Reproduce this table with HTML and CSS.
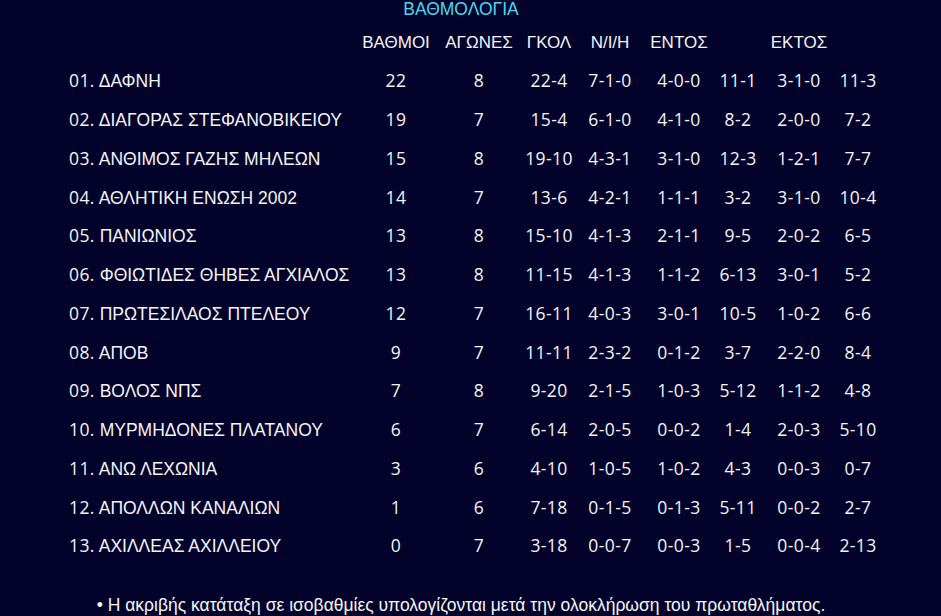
FILE: index.html
```html
<!DOCTYPE html>
<html lang="el">
<head>
<meta charset="utf-8">
<title>ΒΑΘΜΟΛΟΓΙΑ</title>
<link rel="stylesheet" href="styles.css">
</head>
<body>
<div class="page">
  <h1 class="title">ΒΑΘΜΟΛΟΓΙΑ</h1>
  <div class="standings">
    <div class="row head">
      <div></div><div>ΒΑΘΜΟΙ</div><div>ΑΓΩΝΕΣ</div><div>ΓΚΟΛ</div><div>Ν/Ι/Η</div><div>ΕΝΤΟΣ</div><div></div><div>ΕΚΤΟΣ</div><div></div>
    </div>
    <div class="row"><div class="name"><span class="n">01.</span> ΔΑΦΝΗ</div><div class="n">22</div><div class="n">8</div><div class="n">22-4</div><div class="n">7-1-0</div><div class="n">4-0-0</div><div class="n">11-1</div><div class="n">3-1-0</div><div class="n">11-3</div></div>
    <div class="row"><div class="name"><span class="n">02.</span> ΔΙΑΓΟΡΑΣ ΣΤΕΦΑΝΟΒΙΚΕΙΟΥ</div><div class="n">19</div><div class="n">7</div><div class="n">15-4</div><div class="n">6-1-0</div><div class="n">4-1-0</div><div class="n">8-2</div><div class="n">2-0-0</div><div class="n">7-2</div></div>
    <div class="row"><div class="name"><span class="n">03.</span> ΑΝΘΙΜΟΣ ΓΑΖΗΣ ΜΗΛΕΩΝ</div><div class="n">15</div><div class="n">8</div><div class="n">19-10</div><div class="n">4-3-1</div><div class="n">3-1-0</div><div class="n">12-3</div><div class="n">1-2-1</div><div class="n">7-7</div></div>
    <div class="row"><div class="name"><span class="n">04.</span> ΑΘΛΗΤΙΚΗ ΕΝΩΣΗ 2002</div><div class="n">14</div><div class="n">7</div><div class="n">13-6</div><div class="n">4-2-1</div><div class="n">1-1-1</div><div class="n">3-2</div><div class="n">3-1-0</div><div class="n">10-4</div></div>
    <div class="row"><div class="name"><span class="n">05.</span> ΠΑΝΙΩΝΙΟΣ</div><div class="n">13</div><div class="n">8</div><div class="n">15-10</div><div class="n">4-1-3</div><div class="n">2-1-1</div><div class="n">9-5</div><div class="n">2-0-2</div><div class="n">6-5</div></div>
    <div class="row"><div class="name"><span class="n">06.</span> ΦΘΙΩΤΙΔΕΣ ΘΗΒΕΣ ΑΓΧΙΑΛΟΣ</div><div class="n">13</div><div class="n">8</div><div class="n">11-15</div><div class="n">4-1-3</div><div class="n">1-1-2</div><div class="n">6-13</div><div class="n">3-0-1</div><div class="n">5-2</div></div>
    <div class="row"><div class="name"><span class="n">07.</span> ΠΡΩΤΕΣΙΛΑΟΣ ΠΤΕΛΕΟΥ</div><div class="n">12</div><div class="n">7</div><div class="n">16-11</div><div class="n">4-0-3</div><div class="n">3-0-1</div><div class="n">10-5</div><div class="n">1-0-2</div><div class="n">6-6</div></div>
    <div class="row"><div class="name"><span class="n">08.</span> ΑΠΟΒ</div><div class="n">9</div><div class="n">7</div><div class="n">11-11</div><div class="n">2-3-2</div><div class="n">0-1-2</div><div class="n">3-7</div><div class="n">2-2-0</div><div class="n">8-4</div></div>
    <div class="row"><div class="name"><span class="n">09.</span> ΒΟΛΟΣ ΝΠΣ</div><div class="n">7</div><div class="n">8</div><div class="n">9-20</div><div class="n">2-1-5</div><div class="n">1-0-3</div><div class="n">5-12</div><div class="n">1-1-2</div><div class="n">4-8</div></div>
    <div class="row"><div class="name"><span class="n">10.</span> ΜΥΡΜΗΔΟΝΕΣ ΠΛΑΤΑΝΟΥ</div><div class="n">6</div><div class="n">7</div><div class="n">6-14</div><div class="n">2-0-5</div><div class="n">0-0-2</div><div class="n">1-4</div><div class="n">2-0-3</div><div class="n">5-10</div></div>
    <div class="row"><div class="name"><span class="n">11.</span> ΑΝΩ ΛΕΧΩΝΙΑ</div><div class="n">3</div><div class="n">6</div><div class="n">4-10</div><div class="n">1-0-5</div><div class="n">1-0-2</div><div class="n">4-3</div><div class="n">0-0-3</div><div class="n">0-7</div></div>
    <div class="row"><div class="name"><span class="n">12.</span> ΑΠΟΛΛΩΝ ΚΑΝΑΛΙΩΝ</div><div class="n">1</div><div class="n">6</div><div class="n">7-18</div><div class="n">0-1-5</div><div class="n">0-1-3</div><div class="n">5-11</div><div class="n">0-0-2</div><div class="n">2-7</div></div>
    <div class="row"><div class="name"><span class="n">13.</span> ΑΧΙΛΛΕΑΣ ΑΧΙΛΛΕΙΟΥ</div><div class="n">0</div><div class="n">7</div><div class="n">3-18</div><div class="n">0-0-7</div><div class="n">0-0-3</div><div class="n">1-5</div><div class="n">0-0-4</div><div class="n">2-13</div></div>
  </div>
  <p class="note">• Η ακριβής κατάταξη σε ισοβαθμίες υπολογίζονται μετά την ολοκλήρωση του πρωταθλήματος.</p>
</div>
</body>
</html>
```
FILE: styles.css
```css
html, body {
  margin: 0;
  padding: 0;
  background: #03022b;
}
body {
  color: #f4f4f4;
  font-family: "Liberation Sans", Arial, sans-serif;
  font-size: 17.5px;
}
.page {
  width: 922px;
  overflow: hidden;
}
.title {
  margin: 0;
  height: 19px;
  line-height: 19px;
  text-align: center;
  font-size: 17.5px;
  font-weight: normal;
  color: #4fd6ef;
}
.standings {
  padding-left: 69px;
  padding-top: 5px;
}
.row {
  display: grid;
  grid-template-columns: 286px 82px 84px 56px 66px 72px 46px 76px 42px;
  height: 38.75px;
  align-items: center;
}
.row > div {
  text-align: center;
  white-space: nowrap;
}
.row > .name {
  text-align: left;
}
.head > div {
  font-size: 17px;
}
.n {
  font-family: "Open Sans", "Liberation Sans", sans-serif;
  font-size: 17.5px;
  letter-spacing: 0.4px;
}
.head {
  height: 37px;
}
.note {
  margin: 30px 0 0;
  text-align: center;
}
```
